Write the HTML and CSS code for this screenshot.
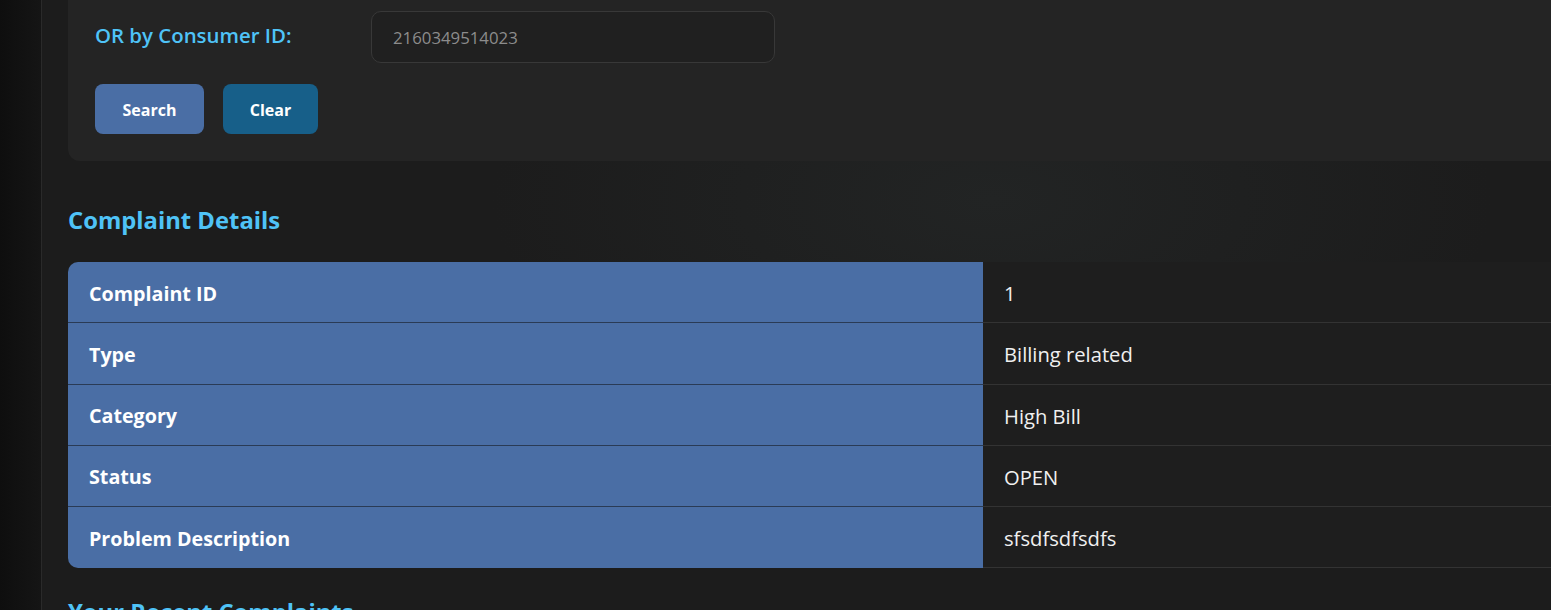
FILE: index.html
```html
<!DOCTYPE html>
<html>
<head>
<meta charset="utf-8">
<link rel="stylesheet" href="styles.css">
</head>
<body>
<div class="layout">
  <aside class="sidebar"></aside>
  <main class="main">
    <section class="search-card">
      <div class="field-row">
        <label class="field-label">OR by Consumer ID:</label>
        <div class="input">2160349514023</div>
      </div>
      <div class="btn-row">
        <button class="btn btn-search">Search</button>
        <button class="btn btn-clear">Clear</button>
      </div>
    </section>
    <h2 class="section-title">Complaint Details</h2>
    <table class="details">
      <tr><th>Complaint ID</th><td>1</td></tr>
      <tr><th>Type</th><td>Billing related</td></tr>
      <tr><th>Category</th><td>High Bill</td></tr>
      <tr><th>Status</th><td>OPEN</td></tr>
      <tr><th>Problem Description</th><td>sfsdfsdfsdfs</td></tr>
    </table>
    <h2 class="section-title recent">Your Recent Complaints</h2>
  </main>
</div>
</body>
</html>
```
FILE: styles.css
```css
* { box-sizing: border-box; }
html, body {
  margin: 0;
  height: 100%;
  overflow: hidden;
  background: #1c1c1c;
  font-family: "Open Sans", "Noto Sans", sans-serif;
}
.layout {
  display: flex;
  min-height: 100%;
}
.sidebar {
  width: 42px;
  flex: none;
  background: linear-gradient(90deg, #0e0e0e, #151515);
  border-right: 1px solid #2a2a2a;
}
.main {
  flex: none;
  width: 1860px;
  padding: 0 0 0 26px;
  background: radial-gradient(ellipse 500px 250px at 950px 200px, #222424, #1c1c1c);
}
.search-card {
  margin-top: -19px;
  padding: 30px 28px 27px 27px;
  background: #242424;
  border-radius: 12px;
}
.field-row {
  display: flex;
  align-items: center;
}
.field-label {
  width: 276px;
  padding-bottom: 4px;
  color: #4fc3f7;
  font-size: 20.4px;
  font-weight: 600;
}
.input {
  width: 404px;
  height: 52px;
  padding: 1px 21px 0;
  display: flex;
  align-items: center;
  background: #202020;
  border: 1px solid #383838;
  border-radius: 10px;
  color: #8c8c8c;
  font-size: 16.8px;
}
.btn-row {
  display: flex;
  gap: 19px;
  margin-top: 21px;
}
.btn {
  height: 50px;
  border: none;
  border-radius: 8px;
  color: #fff;
  font-family: inherit;
  font-size: 16px;
  font-weight: 700;
  padding: 1px 0 0;
}
.btn-search { background: #4a6ea5; width: 109px; }
.btn-clear { background: #175f89; width: 95px; }
.section-title {
  margin: 0;
  padding-top: 43px;
  padding-bottom: 26px;
  color: #4fc3f7;
  font-size: 23.8px;
  font-weight: 700;
  line-height: 32px;
}
.details {
  width: 1830px;
  border-collapse: separate;
  border-spacing: 0;
}
.details th, .details td {
  height: 61.25px;
  padding: 2px 21px 0;
  text-align: left;
}
.details th {
  width: 915px;
  background: #4a6ea5;
  color: #fff;
  font-size: 19.7px;
  font-weight: 700;
  border-bottom: 1px solid #2a3b55;
}
.details td {
  background: #1e1e1e;
  color: #f0f0f0;
  font-size: 20.2px;
  font-weight: 400;
  border-bottom: 1px solid #333;
}
.details tr:first-child th { border-top-left-radius: 10px; }
.details tr:last-child th { border-bottom-left-radius: 10px; border-bottom: none; }
.section-title.recent { padding-top: 28px; }
```
